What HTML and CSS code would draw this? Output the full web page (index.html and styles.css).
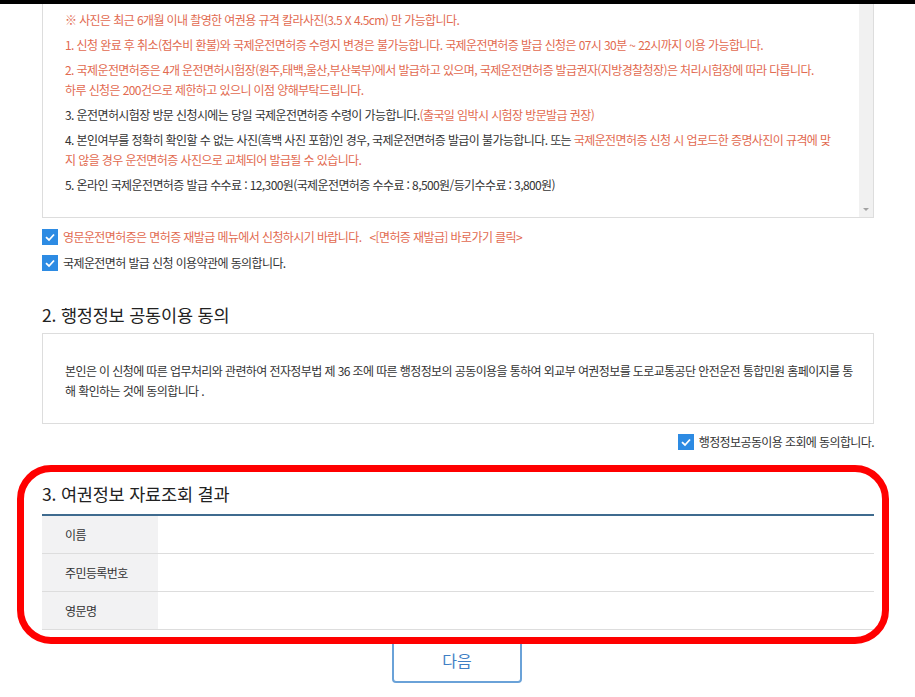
FILE: index.html
```html
<!DOCTYPE html>
<html lang="ko">
<head>
<meta charset="utf-8">
<title>국제운전면허증 발급 신청</title>
<link rel="stylesheet" href="styles.css">
</head>
<body>
<div class="topbar"></div>
<main class="page">
  <div class="terms">
    <div class="terms-body">
      <p class="red">※ 사진은 최근 6개월 이내 촬영한 여권용 규격 칼라사진(3.5 X 4.5cm) 만 가능합니다.</p>
      <p class="red">1. 신청 완료 후 취소(접수비 환불)와 국제운전면허증 수령지 변경은 불가능합니다. 국제운전면허증 발급 신청은 07시 30분 ~ 22시까지 이용 가능합니다.</p>
      <p class="red">2. 국제운전면허증은 4개 운전면허시험장(원주,태백,울산,부산북부)에서 발급하고 있으며, 국제운전면허증 발급권자(지방경찰청장)은 처리시험장에 따라 다릅니다.<br>하루 신청은 200건으로 제한하고 있으니 이점 양해부탁드립니다.</p>
      <p>3. 운전면허시험장 방문 신청시에는 당일 국제운전면허증 수령이 가능합니다.<span class="red">(출국일 임박시 시험장 방문발급 권장)</span></p>
      <p>4. 본인여부를 정확히 확인할 수 없는 사진(흑백 사진 포함)인 경우, 국제운전면허증 발급이 불가능합니다. 또는 <span class="red">국제운전면허증 신청 시 업로드한 증명사진이 규격에 맞<br>지 않을 경우 운전면허증 사진으로 교체되어 발급될 수 있습니다.</span></p>
      <p>5. 온라인 국제운전면허증 발급 수수료 : 12,300원(국제운전면허증 수수료 : 8,500원/등기수수료 : 3,800원)</p>
    </div>
    <div class="scrollbar"><span class="arrow"></span></div>
  </div>

  <label class="check first">
    <svg class="box" viewBox="0 0 16 16"><rect width="16" height="16" fill="#2d8be3"/><path d="M4 8.2 L7 11 L12 5.5" fill="none" stroke="#fff" stroke-width="1.8"/></svg>
    <span class="red">영문운전면허증은 면허증 재발급 메뉴에서 신청하시기 바랍니다.</span>
    <span class="red link">&lt;[면허증 재발급] 바로가기 클릭&gt;</span>
  </label>
  <label class="check">
    <svg class="box" viewBox="0 0 16 16"><rect width="16" height="16" fill="#2d8be3"/><path d="M4 8.2 L7 11 L12 5.5" fill="none" stroke="#fff" stroke-width="1.8"/></svg>
    <span>국제운전면허 발급 신청 이용약관에 동의합니다.</span>
  </label>

  <h2 class="title">2. 행정정보 공동이용 동의</h2>
  <div class="notice">
    본인은 이 신청에 따른 업무처리와 관련하여 전자정부법 제 36 조에 따른 행정정보의 공동이용을 통하여 외교부 여권정보를 도로교통공단 안전운전 통합민원 홈페이지를 통<br>해 확인하는 것에 동의합니다 .
  </div>
  <label class="check right">
    <svg class="box" viewBox="0 0 16 16"><rect width="16" height="16" fill="#2d8be3"/><path d="M4 8.2 L7 11 L12 5.5" fill="none" stroke="#fff" stroke-width="1.8"/></svg>
    <span>행정정보공동이용 조회에 동의합니다.</span>
  </label>

  <section class="result">
    <h2 class="title t3">3. 여권정보 자료조회 결과</h2>
    <table class="info">
      <tr><th>이름</th><td></td></tr>
      <tr><th>주민등록번호</th><td></td></tr>
      <tr><th>영문명</th><td></td></tr>
    </table>
    <div class="highlight"></div>
  </section>

  <div class="actions"><button class="btn" type="button">다음</button></div>
</main>
</body>
</html>
```
FILE: styles.css
```css
* { box-sizing: border-box; }
html, body { margin: 0; padding: 0; background: #fff; }
body {
  font-family: "Noto Sans CJK KR", "Noto Sans", sans-serif;
  color: #333;
  font-size: 12px;
  letter-spacing: -0.6px;
}
.topbar { height: 4px; background: #000; }
.page { width: 832px; margin-left: 42px; position: relative; }

.terms {
  display: flex;
  border: 1px solid #ddd;
  border-top: none;
  height: 214px;
}
.terms-body { flex: 1; padding: 6px 6px 0 22px; }
.terms-body p { margin: 0 0 5px; line-height: 20px; }
.red { color: #e26a50; }
.scrollbar {
  width: 14px;
  background: #f1f1f1;
  position: relative;
}
.scrollbar .arrow {
  position: absolute;
  left: 4px; bottom: 6px;
  border-left: 3px solid transparent;
  border-right: 3px solid transparent;
  border-top: 3px solid #a3a3a3;
}

.check { display: flex; align-items: center; gap: 5px; line-height: 20px; margin-top: 6px; }
.check.first { margin-top: 9px; }
.check .box { width: 16px; height: 16px; flex: none; }
.check .link { margin-left: 3px; }
.check.right { justify-content: flex-end; margin-top: 8px; }

.title {
  margin: 30px 0 0;
  font-size: 17.5px;
  font-weight: 400;
  line-height: 24px;
  color: #222;
  letter-spacing: -0.2px;
}
.notice {
  margin-top: 6px;
  border: 1px solid #ddd;
  padding: 27px 20px 22px 22px;
  line-height: 20px;
}

.result { position: relative; }
.info {
  width: 100%;
  margin-top: 8px;
  border-collapse: collapse;
  border-top: 2px solid #3f6b8f;
}
.info th, .info td { height: 38px; border-bottom: 1px solid #ddd; padding: 0; }
.info th {
  width: 116px;
  background: #f2f2f3;
  text-align: left;
  font-weight: 400;
  padding-left: 23px;
}
.highlight {
  position: absolute;
  left: -25px; right: -15px;
  top: -17px; bottom: -14px;
  border: 7px solid #ff0000;
  border-radius: 34px;
  pointer-events: none;
  z-index: 2;
}

.actions { display: flex; justify-content: center; margin-top: 7px; padding-right: 2px; }
.btn {
  width: 130px; height: 46px;
  background: #fff;
  border: 2px solid #6aa2d8;
  border-radius: 4px;
  color: #3f7fc4;
  font-family: inherit;
  font-size: 16px;
  letter-spacing: 0;
}
```
